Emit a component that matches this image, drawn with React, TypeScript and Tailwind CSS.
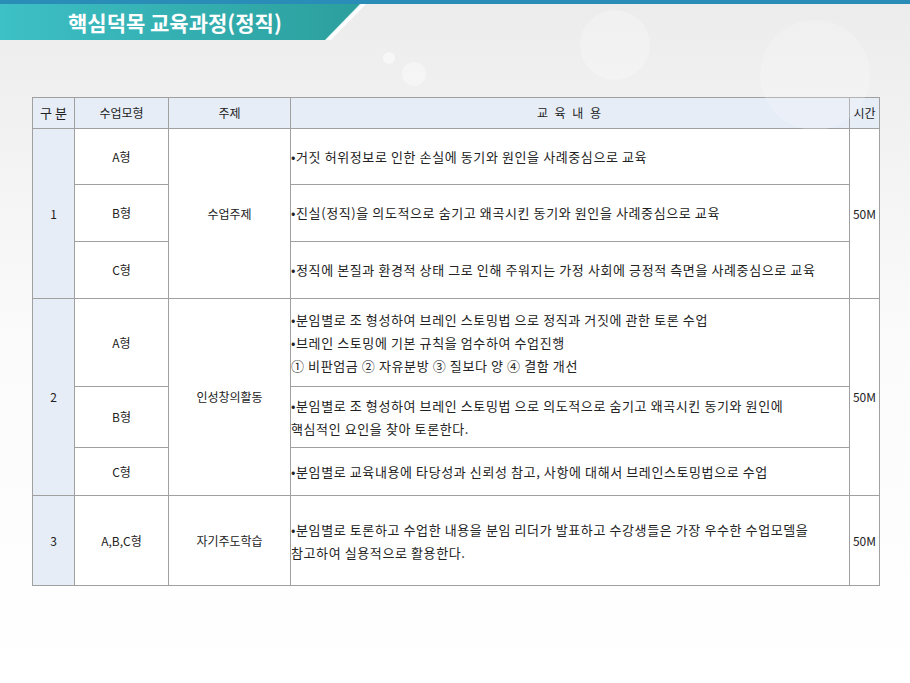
import React from 'react';

const font = { fontFamily: '"Noto Sans CJK KR", "Noto Sans", sans-serif' };

const Cell = ({ children, className = '', rowSpan }: { children?: React.ReactNode; className?: string; rowSpan?: number }) => (
  <td rowSpan={rowSpan} className={`border border-[#a0a0a0] text-[12px] text-[#222] ${className}`}>{children}</td>
);

const Text = ({ children }: { children: React.ReactNode }) => (
  <td className="border border-[#a0a0a0] text-[13px] tracking-[0.6px] text-[#222]">{children}</td>
);

const Line = ({ children }: { children: React.ReactNode }) => <div className="leading-[23px]">{children}</div>;

export default function App() {
  return (
    <div className="relative w-[910px] h-[683px] overflow-hidden bg-gradient-to-b from-[#ececec] via-[#fbfbfb] to-white" style={font}>
      <div className="h-[4px] bg-[#2a8db8]" />
      {/* bokeh */}
      <div className="absolute left-[383px] top-[52px] w-[12px] h-[12px] rounded-full bg-white/50" />
      <div className="absolute left-[402px] top-[62px] w-[24px] h-[24px] rounded-full bg-white/40" />
      <div className="absolute left-[580px] top-[10px] w-[70px] h-[70px] rounded-full bg-white/25" />
      <div className="absolute left-[760px] top-[20px] w-[110px] h-[110px] rounded-full bg-white/20" />
      <div className="relative h-[36px] w-[370px]">
        <div
          className="absolute inset-0 bg-gradient-to-r from-[#3dc0c6] to-[#2b9e9c]"
          style={{ clipPath: 'polygon(0 0, 362px 0, 326px 36px, 0 36px)' }}
        />
        <div
          className="absolute inset-0 bg-white/90"
          style={{ clipPath: 'polygon(360px 0, 366px 0, 331px 36px, 325px 36px)' }}
        />
        <div className="relative pl-[68px] text-white text-[21px] font-bold leading-[36px]">핵심덕목 교육과정(정직)</div>
      </div>
      <div className="pl-[32px] pt-[57px]">
        <table className="border-collapse bg-white table-fixed w-[847px]">
          <colgroup>
            <col className="w-[42px]" />
            <col className="w-[94px]" />
            <col className="w-[122px]" />
            <col className="w-[559px]" />
            <col className="w-[30px]" />
          </colgroup>
          <tbody>
            <tr className="h-[31px] bg-[#e6edf7] text-center">
              <Cell className="text-[13px]">구 분</Cell>
              <Cell>수업모형</Cell>
              <Cell>주제</Cell>
              <Cell className="tracking-[2px]">교 육 내 용</Cell>
              <Cell>시간</Cell>
            </tr>
            <tr className="h-[56px]">
              <Cell rowSpan={3} className="text-center bg-[#e6edf7]">1</Cell>
              <Cell className="text-center">A형</Cell>
              <Cell rowSpan={3} className="text-center">수업주제</Cell>
              <Text>•거짓 허위정보로 인한 손실에 동기와 원인을 사례중심으로 교육</Text>
              <Cell rowSpan={3} className="text-center">50M</Cell>
            </tr>
            <tr className="h-[57px]">
              <Cell className="text-center">B형</Cell>
              <Text>•진실(정직)을 의도적으로 숨기고 왜곡시킨 동기와 원인을 사례중심으로 교육</Text>
            </tr>
            <tr className="h-[57px]">
              <Cell className="text-center">C형</Cell>
              <Text>•정직에 본질과 환경적 상태 그로 인해 주워지는 가정 사회에 긍정적 측면을 사례중심으로 교육</Text>
            </tr>
            <tr className="h-[88px]">
              <Cell rowSpan={3} className="text-center bg-[#e6edf7]">2</Cell>
              <Cell className="text-center">A형</Cell>
              <Cell rowSpan={3} className="text-center">인성창의활동</Cell>
              <Text>
                <Line>•분임별로 조 형성하여 브레인 스토밍법 으로 정직과 거짓에 관한 토론 수업</Line>
                <Line>•브레인 스토밍에 기본 규칙을 엄수하여 수업진행</Line>
                <Line>① 비판엄금 ② 자유분방 ③ 질보다 양 ④ 결함 개선</Line>
              </Text>
              <Cell rowSpan={3} className="text-center">50M</Cell>
            </tr>
            <tr className="h-[61px]">
              <Cell className="text-center">B형</Cell>
              <Text>
                <Line>•분임별로 조 형성하여 브레인 스토밍법 으로 의도적으로 숨기고 왜곡시킨 동기와 원인에</Line>
                <Line>핵심적인 요인을 찾아 토론한다.</Line>
              </Text>
            </tr>
            <tr className="h-[48px]">
              <Cell className="text-center">C형</Cell>
              <Text>•분임별로 교육내용에 타당성과 신뢰성 참고, 사항에 대해서 브레인스토밍법으로 수업</Text>
            </tr>
            <tr className="h-[90px]">
              <Cell className="text-center bg-[#e6edf7]">3</Cell>
              <Cell className="text-center">A,B,C형</Cell>
              <Cell className="text-center">자기주도학습</Cell>
              <Text>
                <Line>•분임별로 토론하고 수업한 내용을 분임 리더가 발표하고 수강생들은 가장 우수한 수업모델을</Line>
                <Line>참고하여 실용적으로 활용한다.</Line>
              </Text>
              <Cell className="text-center">50M</Cell>
            </tr>
          </tbody>
        </table>
      </div>
    </div>
  );
}
